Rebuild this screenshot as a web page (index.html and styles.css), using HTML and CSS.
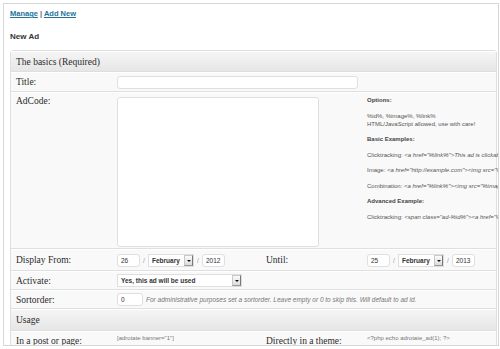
FILE: index.html
```html
<!DOCTYPE html>
<html lang="en">

<head>
    <meta charset="UTF-8">
    <title>New Ad</title>
    <link rel="stylesheet" href="styles.css">
</head>

<body>

    <div class="frame">
        <div class="nav"><a href="#">Manage</a> | <a href="#">Add New</a></div>
        <h3>New Ad</h3>

        <table class="widefat">
            <colgroup>
                <col class="col-label">
                <col class="col-field">
                <col class="col-label">
                <col class="col-side">
            </colgroup>
            <tr class="head">
                <th colspan="4">The basics (Required)</th>
            </tr>
            <tr class="row-title">
                <th>Title:</th>
                <td colspan="3"><input class="inp title-input" type="text" value=""></td>
            </tr>
            <tr class="row-code">
                <th>AdCode:</th>
                <td colspan="2"><textarea class="inp code-area"></textarea></td>
                <td class="options">
                    <p><strong>Options:</strong></p>
                    <p>%id%, %image%, %link%<br>HTML/JavaScript allowed, use with care!</p>
                    <p><strong>Basic Examples:</strong></p>
                    <p>Clicktracking: <em>&lt;a href="%link%"&gt;This ad is clickable&lt;/a&gt;</em></p>
                    <p>Image: <em>&lt;a href="http://example.com"&gt;&lt;img src="%image%" /&gt;&lt;/a&gt;</em></p>
                    <p>Combination: <em>&lt;a href="%link%"&gt;&lt;img src="%image%" /&gt;&lt;/a&gt;</em></p>
                    <p><strong>Advanced Example:</strong></p>
                    <p>Clicktracking: <em>&lt;span class="ad-%id%"&gt;&lt;a href="%link%"&gt;Text Link Ad!&lt;/a&gt;&lt;/span&gt;</em></p>
                </td>
            </tr>
            <tr class="row-date">
                <th>Display From:</th>
                <td>
                    <div class="date">
                        <input class="inp day" type="text" value="26">
                        <span class="sep">/</span>
                        <span class="select month">February<span class="arrow"></span></span>
                        <span class="sep">/</span>
                        <input class="inp year" type="text" value="2012">
                    </div>
                </td>
                <th>Until:</th>
                <td>
                    <div class="date">
                        <input class="inp day" type="text" value="25">
                        <span class="sep">/</span>
                        <span class="select month">February<span class="arrow"></span></span>
                        <span class="sep">/</span>
                        <input class="inp year" type="text" value="2013">
                    </div>
                </td>
            </tr>
            <tr class="row-small">
                <th>Activate:</th>
                <td colspan="3"><span class="select active">Yes, this ad will be used<span class="arrow"></span></span></td>
            </tr>
            <tr class="row-small">
                <th>Sortorder:</th>
                <td colspan="3">
                    <div class="sort">
                        <input class="inp order" type="text" value="0">
                        <em>For administrative purposes set a sortorder. Leave empty or 0 to skip this. Will default to ad id.</em>
                    </div>
                </td>
            </tr>
            <tr class="head head-usage">
                <th colspan="4">Usage</th>
            </tr>
            <tr class="row-usage">
                <th>In a post or page:</th>
                <td class="snippet">[adrotate banner="1"]</td>
                <th>Directly in a theme:</th>
                <td class="snippet">&lt;?php echo adrotate_ad(1); ?&gt;</td>
            </tr>
        </table>
    </div>

</body>

</html>
```

FILE: styles.css
```css
body {
    margin: 0;
    background: #fff;
    color: #333;
    font-family: "Liberation Sans", Arial, sans-serif;
}

.frame {
    margin: 3px 1px 0 3px;
    height: 343px;
    padding: 5px 0 0 6px;
    border: 1px solid #d6d6d6;
    box-sizing: border-box;
    overflow: hidden;
}

.nav {
    font-size: 7.5px;
    font-weight: bold;
    line-height: 10px;
    color: #666;
}

.nav a {
    color: #21759b;
}

h3 {
    margin: 13px 0 0;
    font-size: 8px;
    line-height: 10px;
    color: #333;
}

table {
    margin-top: 8px;
    width: 487px;
    table-layout: fixed;
    border-collapse: separate;
    border-spacing: 0;
    border: 1px solid #dfdfdf;
    border-radius: 3px;
    background: #f9f9f9;
}

.col-label {
    width: 101px;
}

.col-field {
    width: 149px;
}

.col-side {
    width: 134px;
}

th,
td {
    padding: 0 5px;
    border-top: 1px solid #fff;
    border-bottom: 1px solid #dfdfdf;
    text-align: left;
    vertical-align: middle;
}

th {
    font-family: "Liberation Serif", serif;
    font-size: 9.5px;
    font-weight: normal;
    color: #2b2b2b;
}

.head {
    height: 21px;
}

.head th {
    background: linear-gradient(#f5f5f5, #e6e6e6);
}

.head-usage {
    height: 22px;
}

.row-title {
    height: 20px;
}

.row-code {
    height: 157px;
}

.row-code th,
.row-code td {
    vertical-align: top;
    padding-top: 3px;
}

.row-date {
    height: 22px;
}

.row-small {
    height: 19px;
}

.row-usage {
    height: 20px;
}

/* inputs */
.inp {
    display: block;
    margin: 0;
    padding: 0 3px;
    height: 13px;
    border: 1px solid #dfdfdf;
    border-radius: 3px;
    background: #fff;
    box-sizing: border-box;
    font-family: "Liberation Sans", Arial, sans-serif;
    font-size: 6.5px;
    color: #333;
    outline: none;
}

.title-input {
    width: 241px;
}

.code-area {
    width: 202px;
    height: 150px;
    margin-top: 1px;
    resize: none;
}

.date {
    display: flex;
    align-items: center;
    gap: 2px;
}

.day {
    width: 23px;
}

.year {
    width: 23px;
}

.sep {
    width: 4px;
    text-align: center;
    font-size: 6.5px;
    color: #999;
}

.select {
    display: flex;
    align-items: center;
    justify-content: space-between;
    height: 13px;
    padding-left: 3px;
    border: 1px solid #dfdfdf;
    background: #fff;
    box-sizing: border-box;
    font-size: 6.5px;
    font-weight: bold;
    color: #333;
}

.month {
    width: 46px;
}

.active {
    width: 125px;
}

.arrow {
    position: relative;
    width: 9px;
    height: 11px;
    border: 1px solid #c8c8c8;
    border-right-color: #777;
    border-bottom-color: #999;
    background: linear-gradient(#fbfbfb, #dcdcdc);
    box-sizing: border-box;
}

.arrow::after {
    content: "";
    position: absolute;
    left: 2px;
    top: 4px;
    border-left: 2px solid transparent;
    border-right: 2px solid transparent;
    border-top: 2px solid #111;
}

.sort {
    display: flex;
    align-items: center;
    gap: 3px;
    white-space: nowrap;
}

.order {
    width: 26px;
}

.sort em {
    font-size: 6.5px;
    color: #777;
}

/* options column */
.options {
    padding-top: 4px;
    font-size: 6px;
    line-height: 8px;
    color: #555;
    white-space: nowrap;
}

.options p {
    margin: 0 0 7.5px;
}

.options strong {
    color: #444;
}

.snippet {
    font-size: 6px;
    color: #777;
    vertical-align: top;
    padding-top: 3px;
}
```
